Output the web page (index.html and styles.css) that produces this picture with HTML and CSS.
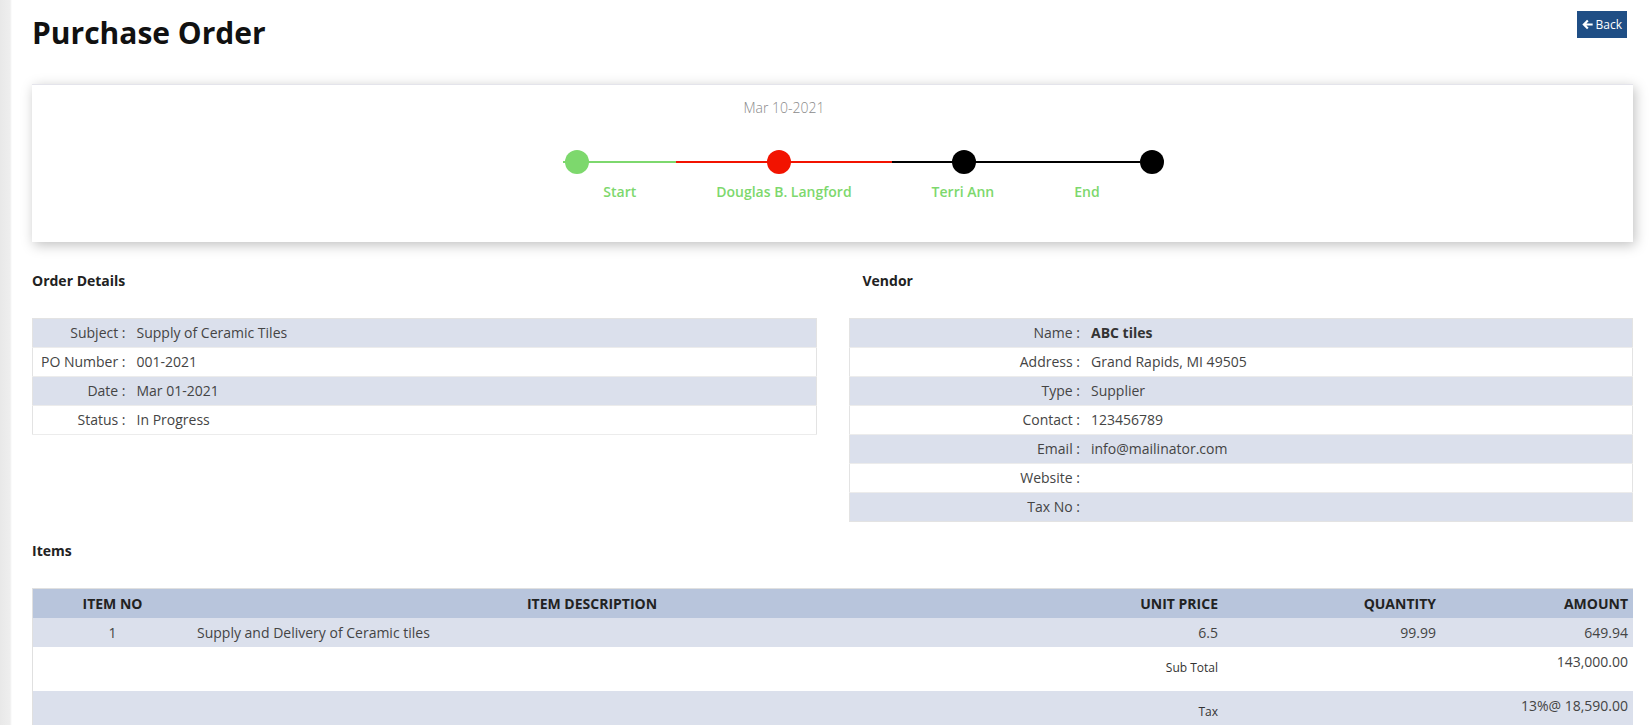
FILE: index.html
```
<!DOCTYPE html>
<html lang="en">
<head>
    <meta charset="UTF-8">
    <meta name="viewport" content="width=device-width, initial-scale=1.0">
    <title>Purchase Order</title>
    <link rel="stylesheet" href="styles.css">
</head>
<body>
    <div class="page">
        <div class="head">
            <h1>Purchase Order</h1>
            <a href="#" class="btn-back">
                <svg width="11" height="11" viewBox="0 0 10 10"><path d="M0.3 5 L4.6 0.7 L6 2.1 L4 4 H9.7 V6 H4 L6 7.9 L4.6 9.3 Z" fill="#fff"/></svg>
                Back
            </a>
        </div>

        <div class="card">
            <ul class="timeline">
                <li class="step step-start">
                    <div class="stamp"></div>
                    <div class="status"><h4>Start</h4></div>
                </li>
                <li class="step step-current">
                    <div class="stamp">Mar 10-2021</div>
                    <div class="status"><h4>Douglas B. Langford</h4></div>
                </li>
                <li class="step step-next">
                    <div class="stamp"></div>
                    <div class="status"><h4>Terri Ann</h4></div>
                </li>
                <li class="step step-end">
                    <div class="stamp"></div>
                    <div class="status"><h4>End</h4></div>
                </li>
            </ul>
        </div>

        <div class="details">
            <div class="col">
                <h5>Order Details</h5>
                <table class="info info-order">
                    <tr><td class="lbl">Subject :</td><td>Supply of Ceramic Tiles</td></tr>
                    <tr><td class="lbl">PO Number :</td><td>001-2021</td></tr>
                    <tr><td class="lbl">Date :</td><td>Mar 01-2021</td></tr>
                    <tr><td class="lbl">Status :</td><td>In Progress</td></tr>
                </table>
            </div>
            <div class="col">
                <h5 class="vendor-title">Vendor</h5>
                <table class="info info-vendor">
                    <tr><td class="lbl">Name :</td><td><b>ABC tiles</b></td></tr>
                    <tr><td class="lbl">Address :</td><td>Grand Rapids, MI 49505</td></tr>
                    <tr><td class="lbl">Type :</td><td>Supplier</td></tr>
                    <tr><td class="lbl">Contact :</td><td>123456789</td></tr>
                    <tr><td class="lbl">Email :</td><td>info@mailinator.com</td></tr>
                    <tr><td class="lbl">Website :</td><td></td></tr>
                    <tr><td class="lbl">Tax No :</td><td></td></tr>
                </table>
            </div>
        </div>

        <h5 class="items-title">Items</h5>
        <table class="items">
            <thead>
                <tr>
                    <th class="c-no">ITEM NO</th>
                    <th class="c-desc">ITEM DESCRIPTION</th>
                    <th class="c-num c-price">UNIT PRICE</th>
                    <th class="c-num c-qty">QUANTITY</th>
                    <th class="c-num c-amt">AMOUNT</th>
                </tr>
            </thead>
            <tbody>
                <tr class="shade">
                    <td class="c-no">1</td>
                    <td>Supply and Delivery of Ceramic tiles</td>
                    <td class="c-num">6.5</td>
                    <td class="c-num">99.99</td>
                    <td class="c-num">649.94</td>
                </tr>
                <tr class="sum">
                    <td></td>
                    <td></td>
                    <td class="c-num sum-lbl">Sub Total</td>
                    <td></td>
                    <td class="c-num sum-val">143,000.00</td>
                </tr>
                <tr class="sum sum-tax shade">
                    <td></td>
                    <td></td>
                    <td class="c-num sum-lbl">Tax</td>
                    <td></td>
                    <td class="c-num sum-val">13%@ 18,590.00</td>
                </tr>
            </tbody>
        </table>
    </div>
</body>
</html>
```

FILE: styles.css
```
body {
    margin: 0;
    font-family: "Open Sans", "Noto Sans", sans-serif;
    font-size: 14px;
    color: #333;
    background: linear-gradient(to right, #e8e8e8 0, #eeeeee 10px, #fff 12px) no-repeat;
    background-color: #fff;
}

.page {
    padding: 0 16px 0 32px;
}

.head {
    display: flex;
    justify-content: space-between;
    align-items: flex-start;
    margin-bottom: 31px;
}

.head h1 {
    margin: 13px 0 0;
    font-size: 30px;
    line-height: 40px;
    font-weight: 700;
    color: #111;
}

.btn-back {
    display: inline-flex;
    align-items: center;
    gap: 3px;
    height: 27px;
    margin: 11px 6px 0 0;
    padding: 0 5px;
    background-color: #1f4e85;
    color: #fff;
    font-size: 12px;
    text-decoration: none;
    box-sizing: border-box;
}

/* timeline card */
.card {
    background: #fff;
    border-top: 1px solid #e4e4eb;
    box-shadow: 2px 3px 12px rgba(0, 0, 0, 0.25);
    padding: 13px 0 40px;
}

.timeline {
    list-style: none;
    margin: 0;
    padding: 0 0 0 38px;
    display: flex;
    justify-content: center;
}

.stamp {
    height: 20px;
    line-height: 20px;
    margin-bottom: 43px;
    text-align: center;
    color: #8a8a8a;
    font-weight: 300;
}

.status {
    position: relative;
    border-top: 2px solid #000;
    padding: 0 40px;
    display: flex;
    justify-content: center;
}

.status h4 {
    margin: 19px 0 0;
    line-height: 20px;
    font-size: 14px;
    font-weight: 600;
    color: #7dd86d;
    white-space: nowrap;
}

.status:before {
    content: "";
    position: absolute;
    top: -13px;
    left: 42%;
    width: 24px;
    height: 24px;
    border-radius: 50%;
    background-color: #000;
}

.step-start .status { border-top-color: #7dd86d; }
.step-start .status:before { background-color: #7dd86d; left: 2px; }

.step-current .status { border-top-color: #f21300; }
.step-current .status:before { background-color: #f21300; }

.step-end .status:before { left: 100%; }

/* details */
.details {
    display: flex;
    gap: 32px;
    margin-top: 29px;
}

.col {
    flex: 1;
}

h5 {
    margin: 0 0 27px;
    font-size: 14px;
    line-height: 20px;
    font-weight: 700;
    color: #222;
}

.vendor-title {
    padding-left: 14px;
}

.info {
    width: 100%;
    border-collapse: collapse;
    border: 1px solid #e3e3e3;
}

.info td {
    height: 29px;
    padding: 0 5px 0 6px;
    line-height: 20px;
    box-sizing: border-box;
    color: #444;
}

.info tr:nth-child(odd) td {
    background-color: #dbe0ec;
}

.info tr:nth-child(even) td {
    border-top: 1px solid #ececec;
    border-bottom: 1px solid #ececec;
}

.info td.lbl {
    text-align: right;
    padding-right: 5px;
}

.info-order .lbl { width: 98px; }
.info-vendor .lbl { width: 236px; }

.info b {
    color: #333;
}

/* items */
.items-title {
    margin-top: 19px;
}

.items {
    width: 100%;
    border-collapse: collapse;
    border-left: 1px solid #e0e0e0;
    border-top: 1px solid #e0e0e0;
}

.items th {
    height: 29px;
    padding: 0 5px;
    background-color: #b8c5dc;
    font-weight: 700;
    color: #222;
    text-align: center;
}

.items td {
    height: 29px;
    padding: 0 5px;
    color: #444;
    box-sizing: border-box;
}

.items .c-no { width: 149px; text-align: center; }
.items .c-price { width: 221px; }
.items .c-qty { width: 208px; }
.items .c-amt { width: 182px; }
.items .c-num { text-align: right; padding-right: 5px; }

.items tr.shade td {
    background-color: #dbe0ec;
}

.items tr.sum td {
    height: 44px;
    vertical-align: top;
}

.items td.sum-lbl {
    padding-top: 13px;
    font-size: 12px;
    line-height: 16px;
    color: #333;
}

.items td.sum-val {
    padding-top: 5px;
    line-height: 20px;
}

.items tr.sum-tax td {
    height: 88px;
}
```
